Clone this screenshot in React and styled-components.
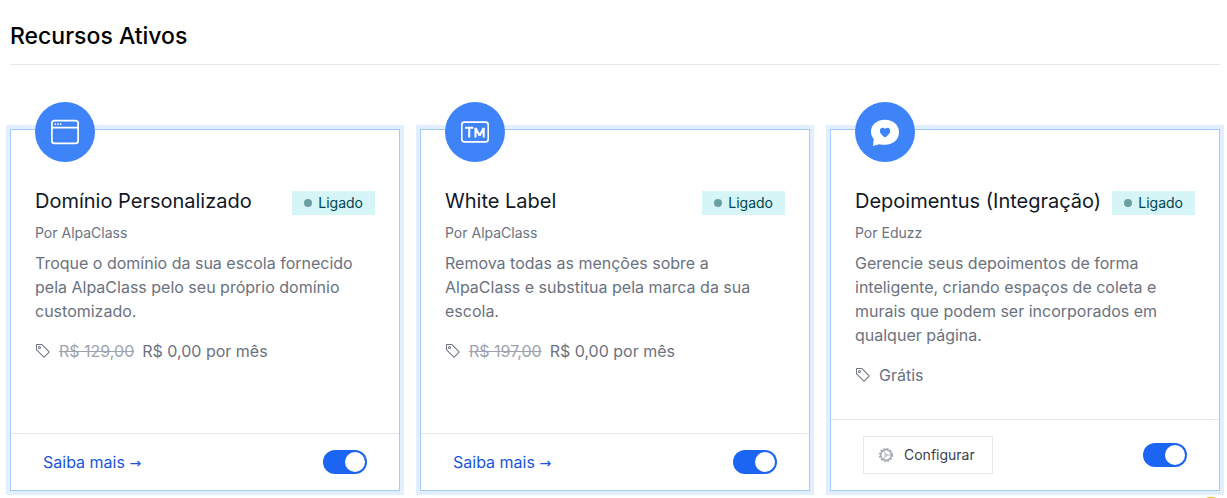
import React from "react";
import styled, { createGlobalStyle } from "styled-components";

const Global = createGlobalStyle`
  *, *::before, *::after { box-sizing: border-box; }
  body { margin: 0; background: #fff; font-family: Inter, "Liberation Sans", sans-serif; font-size: 16px; line-height: 24px; color: #6b7280; overflow: hidden; }
`;

const Page = styled.main`
  padding: 16px 7px 8px 10px;
`;
const Heading = styled.h1`
  margin: 0 0 64px;
  padding: 4px 0 12px;
  font-size: 23px;
  line-height: 32px;
  font-weight: 500;
  color: #000;
  border-bottom: 1px solid #e5e7eb;
`;
const Grid = styled.div`
  display: grid;
  grid-template-columns: repeat(3, 1fr);
  gap: 20px;
`;
const Card = styled.article`
  display: flex;
  flex-direction: column;
  border: 1px solid #a4cafe;
  box-shadow: 0 0 0 4px #e1effe;
  background: #fff;
`;
const Body = styled.div`
  flex: 1;
  padding: 0 24px 32px;
`;
const Emblem = styled.div`
  display: flex;
  align-items: center;
  justify-content: center;
  width: 60px;
  height: 60px;
  margin: -28px 0 24px;
  border-radius: 50%;
  background: #3f83f8;
  color: #fff;
`;
const TitleRow = styled.div`
  display: flex;
  align-items: center;
  justify-content: space-between;
  height: 30px;
  white-space: nowrap;
`;
const Title = styled.h2`
  margin: 0;
  font-size: 20px;
  line-height: 30px;
  font-weight: 400;
  color: #111827;
`;
const Badge = styled.span`
  display: flex;
  align-items: center;
  gap: 6px;
  height: 24px;
  margin-top: 4px;
  padding: 0 12px;
  font-size: 14px;
  color: #014451;
  background: #d5f5f6;

  &::before {
    content: "";
    width: 8px;
    height: 8px;
    border-radius: 50%;
    background: #6a9fa5;
  }
`;
const Author = styled.p`
  margin: 7px 0 8px;
  font-size: 14px;
  line-height: 20px;
`;
const Description = styled.p`
  margin: 0 0 16px;
`;
const Price = styled.div`
  display: flex;
  align-items: center;
  gap: 8px;
`;
const OldPrice = styled.s`
  color: #9ca3af;
`;
const Footer = styled.footer`
  display: flex;
  align-items: center;
  justify-content: space-between;
  padding: 16px 32px;
  border-top: 1px solid #e5e7eb;
`;
const More = styled.a`
  color: #1a56db;
  text-decoration: none;
`;
const Arrow = styled.span`
  font-family: "DejaVu Sans", sans-serif;
  font-size: 14px;
  line-height: 16px;
`;
const Configure = styled.button`
  display: flex;
  align-items: center;
  gap: 10px;
  height: 38px;
  padding: 0 17px 0 14px;
  font: 400 14px/20px Inter, "Liberation Sans", sans-serif;
  color: #374151;
  background: #fff;
  border: 1px solid #e5e7eb;
`;
const Switch = styled.input`
  appearance: none;
  display: flex;
  align-items: center;
  justify-content: flex-end;
  width: 44px;
  height: 24px;
  margin: 0;
  padding: 0 2px;
  border-radius: 12px;
  background: #1c64f2;

  &::before {
    content: "";
    width: 20px;
    height: 20px;
    border-radius: 50%;
    background: #fff;
  }
  &:not(:checked) {
    justify-content: flex-start;
    background: #e5e7eb;
  }
`;
const HelpLauncher = styled.button`
  position: fixed;
  right: 0;
  bottom: -31px;
  width: 32px;
  height: 32px;
  padding: 0;
  border: 0;
  border-radius: 50%;
  background: #f5b921;
`;

const WindowIcon = () => (
  <svg width="28" height="28" viewBox="0 0 16 16" fill="currentColor" aria-hidden="true">
    <path d="M2.500 4a.5.5 0 1 0 0-1 .5.5 0 0 0 0 1m2-.5a.5.5 0 1 1-1 0 .5.5 0 0 1 1 0m1 .5a.5.5 0 1 0 0-1 .5.5 0 0 0 0 1" />
    <path d="M2 1a2 2 0 0 0-2 2v10a2 2 0 0 0 2 2h12a2 2 0 0 0 2-2V3a2 2 0 0 0-2-2zm13 2v2H1V3a1 1 0 0 1 1-1h12a1 1 0 0 1 1 1M2 14a1 1 0 0 1-1-1V6h14v7a1 1 0 0 1-1 1z" />
  </svg>
);
const TrademarkIcon = () => (
  <svg width="28" height="22" viewBox="0 0 28 22" fill="none" stroke="currentColor" aria-hidden="true">
    <rect x="0.8" y="1.1" width="26.4" height="19.8" rx="2.6" strokeWidth="1.6" />
    <path d="M4 6.700h8.400M8.200 6.700v9.800M14.500 16.500V7l4.100 7.500L22.700 7v9.500" strokeWidth="2.100" strokeLinejoin="bevel" />
  </svg>
);
const HeartBubbleIcon = () => (
  <svg width="28" height="28" viewBox="0 0 28 28" aria-hidden="true">
    <path fill="#fff" d="M14 1.800C6.200 1.800 0 6.600 0 13.400c0 3.300 1 5.700 2.800 7.700L2 27.900l6.200-1.700c1.800.5 3.700.6 5.800.6 8 0 14-5 14-12.500S22 1.800 14 1.800Z" />
    <path fill="#3f83f8" d="M14 19.400c-3-2-5.200-4-5.200-6.700 0-3 3.600-4.200 5.200-1.700 1.600-2.500 5.200-1.300 5.200 1.700 0 2.700-2.200 4.700-5.200 6.700Z" />
  </svg>
);
const TagIcon = () => (
  <svg width="16" height="16" viewBox="0 0 16 16" fill="currentColor" aria-hidden="true">
    <path d="M6 4.500a1.500 1.500 0 1 1-3 0 1.500 1.500 0 0 1 3 0m-1 0a.5.5 0 1 0-1 0 .5.5 0 0 0 1 0" />
    <path d="M2 1h4.586a1 1 0 0 1 .707.293l7 7a1 1 0 0 1 0 1.414l-4.586 4.586a1 1 0 0 1-1.414 0l-7-7A1 1 0 0 1 1 6.586V2a1 1 0 0 1 1-1m0 5.586 7 7L13.586 9l-7-7H2z" />
  </svg>
);
const GearIcon = () => (
  <svg width="16" height="16" viewBox="0 0 16 16" fill="none" stroke="#9ca3af" aria-hidden="true">
    <circle cx="8" cy="8" r="5.300" strokeWidth="1.400" />
    <circle cx="8" cy="8" r="6.400" strokeWidth="1.300" strokeDasharray="1.900 1.450" />
    <circle cx="8" cy="8" r="1.200" strokeWidth=".8" />
    <path d="M9.200 8H13M7.400 7 5.400 3.500M7.400 9l-2 3.500" strokeWidth=".8" />
  </svg>
);

const resources = [
  { id: "dominio", icon: <WindowIcon />, title: "Domínio Personalizado", author: "AlpaClass",
    text: "Troque o domínio da sua escola fornecido pela AlpaClass pelo seu próprio domínio customizado.",
    old: "R$ 129,00", price: "R$ 0,00 por mês" },
  { id: "white-label", icon: <TrademarkIcon />, title: "White Label", author: "AlpaClass",
    text: "Remova todas as menções sobre a AlpaClass e substitua pela marca da sua escola.",
    old: "R$ 197,00", price: "R$ 0,00 por mês" },
  { id: "depoimentus", icon: <HeartBubbleIcon />, title: "Depoimentus (Integração)", author: "Eduzz",
    text: "Gerencie seus depoimentos de forma inteligente, criando espaços de coleta e murais que podem ser incorporados em qualquer página.",
    price: "Grátis", configurable: true },
];

function ResourceCard({ item }) {
  return (
    <Card>
      <Body>
        <Emblem>{item.icon}</Emblem>
        <TitleRow>
          <Title>{item.title}</Title>
          <Badge>Ligado</Badge>
        </TitleRow>
        <Author>Por {item.author}</Author>
        <Description>{item.text}</Description>
        <Price>
          <TagIcon />
          {item.old && <OldPrice>{item.old}</OldPrice>}
          <span>{item.price}</span>
        </Price>
      </Body>
      <Footer>
        {item.configurable
          ? <Configure type="button"><GearIcon />Configurar</Configure>
          : <More href={`#${item.id}`}>Saiba mais <Arrow>→</Arrow></More>}
        <Switch type="checkbox" role="switch" defaultChecked aria-label={item.title} />
      </Footer>
    </Card>
  );
}

export default function App() {
  return (
    <>
      <Global />
      <Page>
        <Heading>Recursos Ativos</Heading>
        <Grid>
          {resources.map((item) => <ResourceCard key={item.id} item={item} />)}
        </Grid>
      </Page>
      <HelpLauncher type="button" aria-label="Ajuda" />
    </>
  );
}
